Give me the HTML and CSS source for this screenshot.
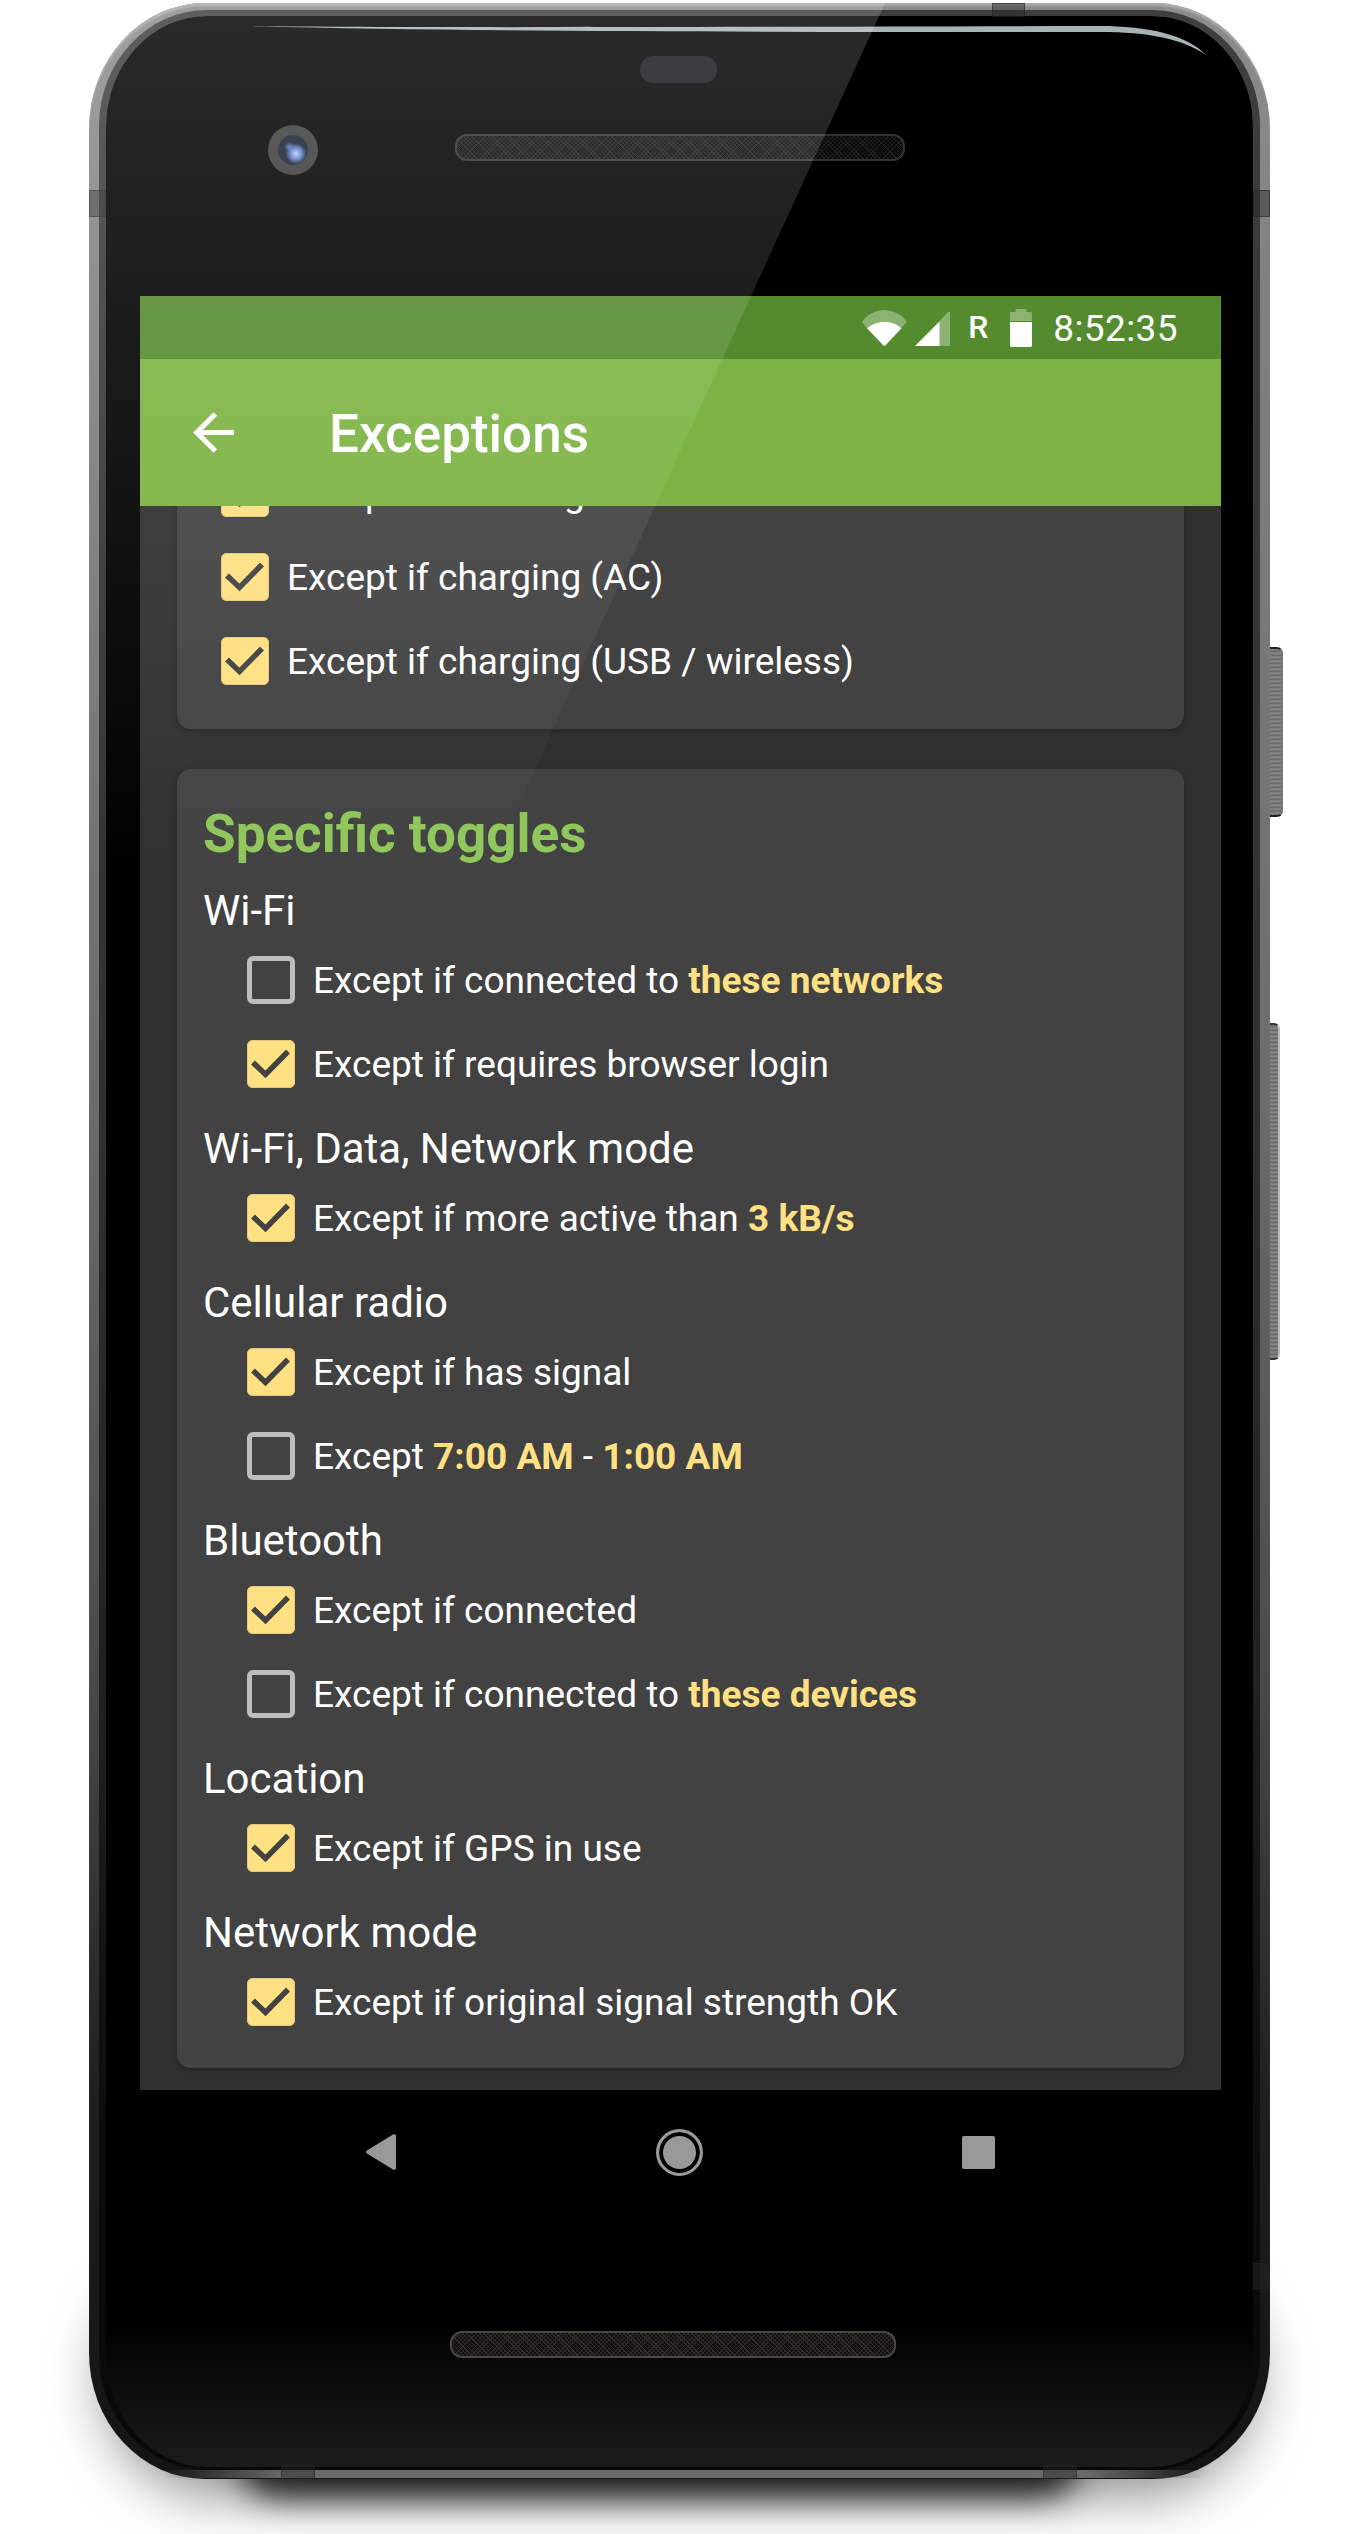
FILE: index.html
```html
<!doctype html>
<html lang="en">
  <head>
    <meta charset="UTF-8" />
    <meta name="viewport" content="width=device-width, initial-scale=1.0" />
    <title>Exceptions</title>
    <link rel="stylesheet" href="styles.css">
  </head>
  <body>
    <div class="device">
      <div class="shadow-wide"></div>
      <div class="shadow-core"></div>

      <div class="side-key side-key-power"></div>
      <div class="side-key side-key-volume"></div>

      <div class="phone">
        <div class="face">
          <!-- Top bezel -->
          <div class="bezel-top">
            <div class="camera"><div class="lens"></div></div>
            <div class="speaker"></div>
            <div class="sensor"></div>
          </div>

          <!-- Screen -->
          <div class="screen">
            <div class="status-bar">
              <svg class="icon-wifi" viewBox="0 0 45 36">
                <path fill="#fff" fill-opacity="0.33" d="M0 11.7C6 4 14 0 22.4 0S39 4 44.7 11.7L39.4 18.3C35 14 29 11.7 22.4 11.7S10 14 5 18.3Z"/>
                <path fill="#fff" d="M5 18.3C10 14 16 11.7 22.4 11.7S35 14 39.4 18.3L23.6 35.2C23 36 21.8 36 21.2 35.2Z"/>
              </svg>
              <svg class="icon-signal" viewBox="0 0 35 35">
                <path fill="#fff" fill-opacity="0.33" d="M25 9.5L33 1C34 0 35 .5 35 2V33C35 34.5 34.5 35 33 35H25Z"/>
                <path fill="#fff" d="M0 35L24.7 10.3V35Z"/>
              </svg>
              <span class="status-r">R</span>
              <svg class="icon-battery" viewBox="0 0 22 38">
                <path fill="#fff" fill-opacity="0.33" d="M5.5 3V1C5.5 .4 6 0 6.5 0H15.5C16 0 16.5 .4 16.5 1V3H20.5C21.4 3 22 3.6 22 4.5V12H0V4.5C0 3.6 .6 3 1.5 3Z"/>
                <path fill="#fff" d="M0 13H22V36.5C22 37.4 21.4 38 20.5 38H1.5C.6 38 0 37.4 0 36.5Z"/>
              </svg>
              <span class="status-time">8:52:35</span>
            </div>

            <div class="toolbar">
              <svg class="icon-back" viewBox="0 0 24 24">
                <path fill="#fff" d="M20 11H7.83l5.59-5.59L12 4l-8 8 8 8 1.41-1.41L7.83 13H20v-2z"/>
              </svg>
              <h1 class="toolbar-title">Exceptions</h1>
            </div>

            <div class="content">
              <section class="card card-scrolled">
                <label class="row">
                  <span class="check checked"><svg viewBox="0 0 48 48"><path d="M6 22.5L18.5 34.5L41 11.5"/></svg></span>
                  <span>Except if tethering</span>
                </label>
                <label class="row">
                  <span class="check checked"><svg viewBox="0 0 48 48"><path d="M6 22.5L18.5 34.5L41 11.5"/></svg></span>
                  <span>Except if charging (AC)</span>
                </label>
                <label class="row">
                  <span class="check checked"><svg viewBox="0 0 48 48"><path d="M6 22.5L18.5 34.5L41 11.5"/></svg></span>
                  <span>Except if charging (USB / wireless)</span>
                </label>
              </section>

              <section class="card card-toggles">
                <h2 class="card-title">Specific toggles</h2>

                <div class="group">
                  <h3 class="group-label">Wi-Fi</h3>
                  <label class="row">
                    <span class="check"></span>
                    <span>Except if connected to <b>these networks</b></span>
                  </label>
                  <label class="row">
                    <span class="check checked"><svg viewBox="0 0 48 48"><path d="M6 22.5L18.5 34.5L41 11.5"/></svg></span>
                    <span>Except if requires browser login</span>
                  </label>
                </div>

                <div class="group">
                  <h3 class="group-label">Wi-Fi, Data, Network mode</h3>
                  <label class="row">
                    <span class="check checked"><svg viewBox="0 0 48 48"><path d="M6 22.5L18.5 34.5L41 11.5"/></svg></span>
                    <span>Except if more active than <b>3 kB/s</b></span>
                  </label>
                </div>

                <div class="group">
                  <h3 class="group-label">Cellular radio</h3>
                  <label class="row">
                    <span class="check checked"><svg viewBox="0 0 48 48"><path d="M6 22.5L18.5 34.5L41 11.5"/></svg></span>
                    <span>Except if has signal</span>
                  </label>
                  <label class="row">
                    <span class="check"></span>
                    <span>Except <b>7:00 AM</b> - <b>1:00 AM</b></span>
                  </label>
                </div>

                <div class="group">
                  <h3 class="group-label">Bluetooth</h3>
                  <label class="row">
                    <span class="check checked"><svg viewBox="0 0 48 48"><path d="M6 22.5L18.5 34.5L41 11.5"/></svg></span>
                    <span>Except if connected</span>
                  </label>
                  <label class="row">
                    <span class="check"></span>
                    <span>Except if connected to <b>these devices</b></span>
                  </label>
                </div>

                <div class="group">
                  <h3 class="group-label">Location</h3>
                  <label class="row">
                    <span class="check checked"><svg viewBox="0 0 48 48"><path d="M6 22.5L18.5 34.5L41 11.5"/></svg></span>
                    <span>Except if GPS in use</span>
                  </label>
                </div>

                <div class="group">
                  <h3 class="group-label">Network mode</h3>
                  <label class="row">
                    <span class="check checked"><svg viewBox="0 0 48 48"><path d="M6 22.5L18.5 34.5L41 11.5"/></svg></span>
                    <span>Except if original signal strength OK</span>
                  </label>
                </div>
              </section>
            </div>
          </div>

          <!-- Bottom bezel with nav keys -->
          <div class="bezel-bottom">
            <div class="nav-keys">
              <svg class="nav-back" viewBox="0 0 30 36">
                <path fill="#999" d="M1 16.5L27 .5C28.5-.3 30 .3 30 2V34C30 35.7 28.5 36.3 27 35.5L1 19.5C-.3 18.7-.3 17.3 1 16.5Z"/>
              </svg>
              <div class="nav-home"></div>
              <div class="nav-recent"></div>
            </div>
            <div class="speaker speaker-bottom"></div>
          </div>
        </div>

        <!-- Metal rail details -->
        <div class="rail-bottom"></div>
        <div class="band band-top"></div>
        <div class="band band-left"></div>
        <div class="band band-right"></div>
        <div class="band band-right-low"></div>
        <div class="band band-bottom-left"></div>
        <div class="band band-bottom-right"></div>

        <svg class="glass-line" viewBox="0 0 1181 80">
          <path d="M159 23C300 25 600 24 1010 23C1060 23 1098 32 1117 52C1094 36 1060 29 1010 29C700 29 400 29 159 23Z"/>
        </svg>
        <div class="glare"></div>
      </div>
    </div>
  </body>
</html>
```

FILE: styles.css
```css
* {
  margin: 0;
  padding: 0;
  box-sizing: border-box;
}

html,
body {
  height: 2534px;
  overflow: hidden;
}

body {
  font-family: 'Roboto', 'Noto Sans', sans-serif;
  background: white;
  color: white;
}

.device {
  position: relative;
  width: 1181px;
  height: 2476px;
  margin: 3px 0 0 89px;
}

/* Soft shadow on the ground */
.shadow-wide {
  position: absolute;
  left: 15px;
  right: 15px;
  top: 2260px;
  height: 232px;
  background: rgba(0, 0, 0, 0.45);
  border-radius: 120px;
  filter: blur(28px);
}

.shadow-core {
  position: absolute;
  left: 150px;
  right: 190px;
  top: 2400px;
  height: 94px;
  background: #1c1c1c;
  border-radius: 40px;
  filter: blur(16px);
}

.side-key {
  position: absolute;
  border-radius: 0 6px 6px 0;
  background: repeating-linear-gradient(0deg, #6f6f6f 0, #8a8a8a 2px, #5f5f5f 4px);
  border: 2px solid #777;
  border-left: none;
}

.side-key-power {
  left: 1181px;
  top: 644px;
  width: 13px;
  height: 170px;
  border-top-color: #222;
  border-bottom-color: #222;
}

.side-key-volume {
  left: 1181px;
  top: 1020px;
  width: 10px;
  height: 337px;
  border-right-color: #bbb;
  border-top-color: #333;
  border-bottom-color: #333;
}

.phone {
  position: relative;
  width: 1181px;
  height: 2476px;
  padding: 7px 10px 9px;
  border-radius: 116px / 126px;
  background: linear-gradient(to bottom, #8c8c8c 0, #808080 300px, #6c6c6c 1100px, #484848 1700px, #1e1e1e 2100px, #141414 100%);
  box-shadow: inset 0 4px 2px -1px #aaa;
}

.face {
  height: 100%;
  display: flex;
  flex-direction: column;
  padding: 0 32px 0 34px;
  border: 7px solid rgba(0, 0, 0, 0.55);
  border-width: 6px 7px 3px;
  border-radius: 108px / 116px;
  background: linear-gradient(to bottom, #000 0, #000 2310px, #1b1b1b 100%) padding-box;
}

.bezel-top {
  position: relative;
  height: 280px;
  flex: none;
}

.camera {
  position: absolute;
  left: 128px;
  top: 109px;
  width: 50px;
  height: 50px;
  border-radius: 50%;
  background: #3d3d3d;
  display: flex;
  align-items: center;
  justify-content: center;
}

.lens {
  width: 30px;
  height: 30px;
  border-radius: 50%;
  background:
    radial-gradient(circle at 60% 62%, #b9cdf5 0, #5f80c8 22%, transparent 40%),
    radial-gradient(circle at 38% 40%, #5f80c8 0, transparent 20%),
    #1b2235;
}

.speaker {
  position: absolute;
  left: 315px;
  top: 118px;
  width: 450px;
  height: 27px;
  border-radius: 12px;
  border: 2px solid #333;
  background:
    repeating-linear-gradient(45deg, transparent 0, transparent 2px, #1e1e1e 2px, #1e1e1e 3px),
    repeating-linear-gradient(-45deg, transparent 0, transparent 2px, #1a1a1a 2px, #1a1a1a 3px),
    #080808;
}

.sensor {
  position: absolute;
  left: 500px;
  top: 40px;
  width: 77px;
  height: 27px;
  border-radius: 13px;
  background: #17191d;
}

.screen {
  flex: none;
  height: 1794px;
  display: flex;
  flex-direction: column;
  overflow: hidden;
  background: #303030;
}

.status-bar {
  flex: none;
  height: 63px;
  background: #558b2f;
  display: flex;
  align-items: center;
  justify-content: flex-end;
  padding-right: 43px;
}

.icon-wifi {
  width: 45px;
  height: 36px;
  margin: 0 8px 0 0;
}

.icon-signal {
  width: 35px;
  height: 35px;
  margin: 1px 18px 0 0;
}

.status-r {
  font-size: 32px;
  font-weight: 500;
  line-height: 30px;
  margin: -1px 22px 0 0;
}

.icon-battery {
  width: 22px;
  height: 38px;
  margin: 0 21px 0 0;
}

.status-time {
  font-size: 37px;
  line-height: 44px;
  letter-spacing: 0.4px;
  margin-top: 3px;
}

.toolbar {
  flex: none;
  height: 147px;
  background: #7cb342;
  display: flex;
  align-items: center;
  padding-left: 43px;
  position: relative;
}

.icon-back {
  width: 61px;
  height: 61px;
  margin-right: 85px;
}

.toolbar-title {
  font-size: 53px;
  font-weight: 500;
  margin-top: 2px;
}

.content {
  flex: 1;
  min-height: 0;
  padding: 0 37px;
}

.card {
  background: #424242;
  border-radius: 14px;
  box-shadow: 0 2px 6px rgba(0, 0, 0, 0.25);
}

.card-scrolled {
  margin-top: -55px;
  padding: 0 0 26px 44px;
}

.card-toggles {
  margin-top: 40px;
  padding: 25px 26px 24px;
}

.card-title {
  font-size: 53px;
  font-weight: 700;
  line-height: 80px;
  margin-bottom: 10px;
  color: #90c75c;
}

.group + .group {
  margin-top: 16px;
}

.group-label {
  font-size: 42px;
  font-weight: 400;
  line-height: 54px;
}

.group .row {
  padding-left: 44px;
}

.row {
  height: 84px;
  display: flex;
  align-items: center;
  gap: 18px;
  font-size: 37px;
}

.row b {
  color: #ffe082;
  font-weight: 700;
}

.check {
  flex: none;
  width: 48px;
  height: 48px;
  border-radius: 6px;
  border: 5px solid #bdbdbd;
}

.check.checked {
  background: #ffe082;
  border: none;
  box-shadow: inset 0 0 0 1px #e6c878;
}

.check svg {
  display: block;
  width: 48px;
  height: 48px;
  fill: none;
  stroke: #424242;
  stroke-width: 5.5;
}

.bezel-bottom {
  position: relative;
  flex: 1;
}

.nav-keys {
  display: flex;
  align-items: center;
  height: 36px;
  margin: 44px 0 0 226px;
}

.nav-back {
  width: 30px;
  height: 36px;
}

.nav-home {
  width: 47px;
  height: 47px;
  margin-left: 260px;
  border-radius: 50%;
  background: #999;
  border: 3px solid #999;
  box-shadow: inset 0 0 0 4px #000;
}

.nav-recent {
  width: 33px;
  height: 33px;
  margin-left: 259px;
  border-radius: 2px;
  background: #999;
}

.speaker-bottom {
  left: 310px;
  top: 241px;
  width: 446px;
  border-color: #4a4843;
  background:
    repeating-linear-gradient(45deg, transparent 0, transparent 2px, #2e2c27 2px, #2e2c27 3px),
    repeating-linear-gradient(-45deg, transparent 0, transparent 2px, #282622 2px, #282622 3px),
    #100f0d;
}

/* Lit strip along the bottom edge */
.rail-bottom {
  position: absolute;
  left: 70px;
  right: 60px;
  bottom: 1px;
  height: 8px;
  border-radius: 0 0 6px 6px;
  background: linear-gradient(to right, transparent, #6a6a6a 12%, #6a6a6a 88%, transparent);
}

.band {
  position: absolute;
  background: rgba(40, 40, 40, 0.45);
  border: 1px solid rgba(30, 30, 30, 0.5);
}

.band-top {
  left: 903px;
  top: 0;
  width: 33px;
  height: 14px;
}

.band-left {
  left: 0;
  top: 187px;
  width: 17px;
  height: 27px;
}

.band-right {
  right: 0;
  top: 187px;
  width: 17px;
  height: 27px;
}

.band-right-low {
  right: 0;
  top: 2260px;
  width: 17px;
  height: 26px;
}

.band-bottom-left {
  left: 192px;
  bottom: 0;
  width: 34px;
  height: 15px;
}

.band-bottom-right {
  left: 954px;
  bottom: 0;
  width: 34px;
  height: 15px;
}

.glass-line {
  position: absolute;
  left: 0;
  top: 0;
  width: 1181px;
  height: 80px;
  fill: #a8b3b5;
}

/* Diagonal reflection across the glass */
.glare {
  position: absolute;
  inset: 0;
  border-radius: 116px / 126px;
  background: linear-gradient(to bottom, rgba(255, 255, 255, 0.17) 0, rgba(255, 255, 255, 0) 880px);
  clip-path: polygon(0 0, 796px 0, 0 1742px);
  pointer-events: none;
}
```
